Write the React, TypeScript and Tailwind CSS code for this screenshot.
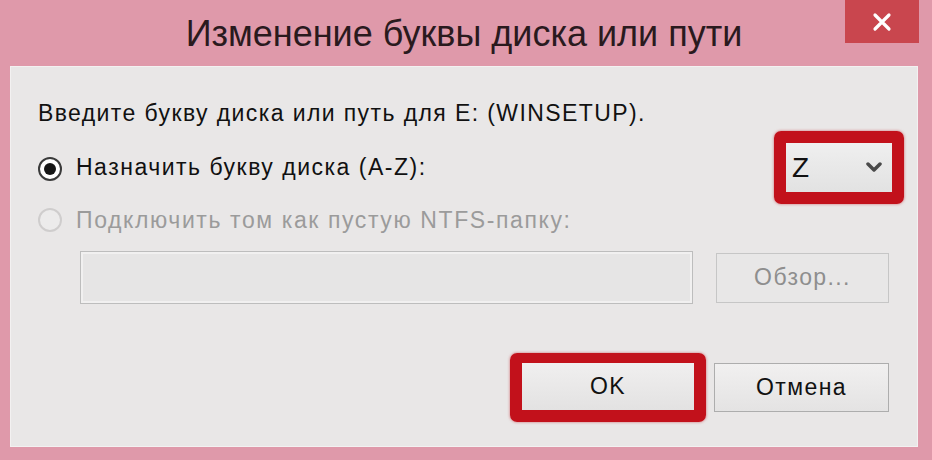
import React from "react";

const font = { fontFamily: '"Liberation Sans", Arial, sans-serif' };

function Radio({ checked, disabled }: { checked?: boolean; disabled?: boolean }) {
  return (
    <span
      className={
        disabled
          ? "flex h-[24px] w-[24px] shrink-0 items-center justify-center rounded-full border-[2px] border-[#cfcdcd] bg-[#ecebeb]"
          : "flex h-[24px] w-[24px] shrink-0 items-center justify-center rounded-full border-[2px] border-[#3a3a3a] bg-white"
      }
    >
      {checked && <span className="h-[12px] w-[12px] rounded-full bg-[#161616]" />}
    </span>
  );
}

function Chevron() {
  return (
    <svg width="16" height="11" viewBox="0 0 16 11">
      <polyline points="2,2 8,8 14,2" fill="none" stroke="#4a4a4a" strokeWidth="3.5" strokeLinecap="round" strokeLinejoin="round" />
    </svg>
  );
}

export default function App() {
  return (
    <div className="flex h-[460px] w-[932px] flex-col bg-[#df99aa]" style={font}>
      {/* title bar */}
      <div className="relative flex h-[66px] shrink-0 justify-center pt-[14px] pr-[4px]">
        <span className="text-[36px] leading-[40px] text-[#2a1a1e]">Изменение буквы диска или пути</span>
        <button className="absolute right-[13px] top-0 flex h-[43px] w-[74px] items-center justify-center bg-[#c9464e]">
          <svg width="20" height="20" viewBox="0 0 20 20">
            <path d="M3 3 L17 17 M17 3 L3 17" stroke="#fff" strokeWidth="3.2" strokeLinecap="round" />
          </svg>
        </button>
      </div>

      {/* dialog body */}
      <div className="ml-[10px] mr-[14px] flex h-[381px] flex-col border border-[#f3f1f1] bg-[#e9e7e7] px-[27px] pt-[33px] pb-[24px] text-[#111]">
        <p className="h-[26px] text-[23px] leading-[26px] tracking-[1.4px]">Введите букву диска или путь для E: (WINSETUP).</p>

        <div className="mt-[6px] flex h-[71px] items-center justify-between">
          <div className="flex items-center gap-[14px] pt-[2px]">
            <Radio checked />
            <span className="-mt-[4px] text-[23px] leading-[26px] tracking-[1.5px]">Назначить букву диска (A-Z):</span>
          </div>
          <div className="-mr-[14px] rounded-[7px] border-[12px] border-[#c2111b] shadow-[0_0_3px_rgba(194,17,27,0.6)]">
            <div className="flex h-[49px] w-[106px] items-center justify-between bg-gradient-to-b from-[#efefef] to-[#e2e2e2] pl-[6px] pr-[10px]">
              <span className="text-[28px] leading-[30px] text-[#111]">Z</span>
              <Chevron />
            </div>
          </div>
        </div>

        <div className="mt-[4px] flex h-[26px] items-center gap-[14px]">
          <Radio disabled />
          <span className="text-[23px] leading-[26px] tracking-[1.6px] text-[#9b9b9b]">Подключить том как пустую NTFS-папку:</span>
        </div>

        <div className="mt-[18px] flex items-center gap-[23px] pl-[42px]">
          <div className="h-[53px] w-[613px] border border-[#bdbdbd] bg-[#e6e5e5] shadow-[inset_0_0_0_2px_#f1f0f0]" />
          <div className="flex h-[50px] w-[173px] items-center justify-center border border-[#c6c6c6] bg-[#e8e7e7] text-[23px] tracking-[1.4px] text-[#8e8e8e]">
            Обзор...
          </div>
        </div>

        <div className="flex-1" />

        <div className="flex items-center justify-end gap-[8px] pr-[1px]">
          <div className="rounded-[7px] border-x-[12px] border-t-[10px] border-b-[12px] border-[#c2111b] shadow-[0_0_3px_rgba(194,17,27,0.6)]">
            <div className="flex h-[47px] w-[172px] items-center justify-center bg-gradient-to-b from-[#f0efef] to-[#e3e2e2] text-[23px] tracking-[1.4px] text-[#111]">
              OK
            </div>
          </div>
          <div className="flex h-[49px] w-[175px] items-center justify-center border border-[#adadad] bg-gradient-to-b from-[#f1f0f0] to-[#e4e3e3] text-[23px] tracking-[1.4px] text-[#111]">
            Отмена
          </div>
        </div>
      </div>
    </div>
  );
}
